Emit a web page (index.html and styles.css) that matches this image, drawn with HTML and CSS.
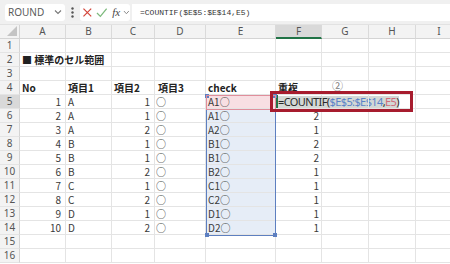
FILE: index.html
```html
<!DOCTYPE html>
<html>
<head>
    <title>COUNTIF</title>
    <link rel="stylesheet" href="styles.css">
</head>
<body>
<div class="formula-bar">
    <div class="namebox">
        <span>ROUND</span>
        <svg width="8" height="6" viewBox="0 0 8 6"><polyline points="1,1.5 4,4.5 7,1.5" fill="none" stroke="#777" stroke-width="1.1"/></svg>
    </div>
    <div class="grip">
        <svg width="3" height="11" viewBox="0 0 3 11"><circle cx="1.5" cy="1.5" r="1.2" fill="#555"/><circle cx="1.5" cy="5.5" r="1.2" fill="#555"/><circle cx="1.5" cy="9.5" r="1.2" fill="#555"/></svg>
    </div>
    <div class="fxbox">
        <svg width="11" height="11" viewBox="0 0 11 11"><path d="M1.5 1.5 L9.5 9.5 M9.5 1.5 L1.5 9.5" stroke="#d4453a" stroke-width="1.3" fill="none"/></svg>
        <svg width="12" height="11" viewBox="0 0 12 11"><polyline points="1,6 4.5,9.5 11,1.5" fill="none" stroke="#7dba7d" stroke-width="1.3"/></svg>
        <i class="fx">fx</i>
        <svg width="7" height="5" viewBox="0 0 7 5"><polyline points="1,1 3.5,3.8 6,1" fill="none" stroke="#888" stroke-width="1"/></svg>
    </div>
    <div class="formula">=COUNTIF($E$5:$E$14,E5)</div>
</div>

<div class="sheet">
    <!-- column headers -->
    <div class="corner"><svg width="10" height="10" viewBox="0 0 10 10"><polygon points="10,0 10,10 0,10" fill="#c4c4c4"/></svg></div>
    <div class="colhead">A</div><div class="colhead">B</div><div class="colhead">C</div><div class="colhead">D</div>
    <div class="colhead">E</div><div class="colhead sel">F</div><div class="colhead">G</div><div class="colhead">H</div><div class="colhead">I</div>

    <div class="rowhead">1</div><div></div><div></div><div></div><div></div><div></div><div></div><div></div><div></div><div></div>
    <div class="rowhead">2</div><div class="bold">■ 標準のセル範囲</div><div></div><div></div><div></div><div></div><div></div><div></div><div></div><div></div>
    <div class="rowhead">3</div><div></div><div></div><div></div><div></div><div></div><div></div><div></div><div></div><div></div>
    <div class="rowhead">4</div><div class="bold">No</div><div class="bold hd">項目1</div><div class="bold hd hd2">項目2</div><div class="bold hd hd3">項目3</div><div class="bold">check</div><div class="bold">重複</div><div class="circled">②</div><div></div><div></div>

    <div class="rowhead sel">5</div><div class="num">1</div><div class="txt">A</div><div class="num c">1</div><div class="mark">○</div><div class="ref red">A1○</div>
    <div class="editing"><span class="f-text">=COUNTIF(<span class="f-blue">$E$5:$E$14</span>,<span class="f-red">E5</span>)</span></div><div></div><div></div><div></div>
    <div class="rowhead">6</div><div class="num">2</div><div class="txt">A</div><div class="num c">1</div><div class="mark">○</div><div class="ref">A1○</div><div class="num f">2</div><div></div><div></div><div></div>
    <div class="rowhead">7</div><div class="num">3</div><div class="txt">A</div><div class="num c">2</div><div class="mark">○</div><div class="ref">A2○</div><div class="num f">1</div><div></div><div></div><div></div>
    <div class="rowhead">8</div><div class="num">4</div><div class="txt">B</div><div class="num c">1</div><div class="mark">○</div><div class="ref">B1○</div><div class="num f">2</div><div></div><div></div><div></div>
    <div class="rowhead">9</div><div class="num">5</div><div class="txt">B</div><div class="num c">1</div><div class="mark">○</div><div class="ref">B1○</div><div class="num f">2</div><div></div><div></div><div></div>
    <div class="rowhead">10</div><div class="num">6</div><div class="txt">B</div><div class="num c">2</div><div class="mark">○</div><div class="ref">B2○</div><div class="num f">1</div><div></div><div></div><div></div>
    <div class="rowhead">11</div><div class="num">7</div><div class="txt">C</div><div class="num c">1</div><div class="mark">○</div><div class="ref">C1○</div><div class="num f">1</div><div></div><div></div><div></div>
    <div class="rowhead">12</div><div class="num">8</div><div class="txt">C</div><div class="num c">2</div><div class="mark">○</div><div class="ref">C2○</div><div class="num f">1</div><div></div><div></div><div></div>
    <div class="rowhead">13</div><div class="num">9</div><div class="txt">D</div><div class="num c">1</div><div class="mark">○</div><div class="ref">D1○</div><div class="num f">1</div><div></div><div></div><div></div>
    <div class="rowhead">14</div><div class="num">10</div><div class="txt">D</div><div class="num c">2</div><div class="mark">○</div><div class="ref">D2○</div><div class="num f">1</div><div></div><div></div><div></div>
    <div class="rowhead">15</div><div></div><div></div><div></div><div></div><div></div><div></div><div></div><div></div><div></div>
    <div class="rowhead">16</div><div></div><div></div><div></div><div></div><div></div><div></div><div></div><div></div><div></div>

    <!-- overlays: referenced ranges and the annotation box -->
    <div class="range-blue"><i class="handle tl"></i><i class="handle tr"></i><i class="handle bl"></i><i class="handle br"></i></div>
    <div class="range-red"></div>
    <div class="callout"></div>
</div>
</body>
</html>
```

FILE: styles.css
```css
* {
    box-sizing: border-box;
}

body {
    margin: 0;
    width: 450px;
    height: 264px;
    overflow: hidden;
    background: #fff;
    color: #3a3a3a;
    font-family: "Noto Sans CJK JP", "Noto Sans", sans-serif;
    font-size: 10px;
}

/* Formula bar */
.formula-bar {
    display: flex;
    align-items: center;
    height: 25px;
    padding-left: 5px;
    background: #f0f0f0;
    border-bottom: 1px solid #e2e2e2;
}

.namebox {
    display: flex;
    align-items: center;
    justify-content: space-between;
    width: 60px;
    height: 17px;
    padding: 0 3px;
    background: #fff;
    border-radius: 3px;
    color: #5a5a5a;
    font-family: "Noto Sans", sans-serif;
    font-size: 10px;
}

.grip {
    display: flex;
    justify-content: center;
    width: 15px;
}

.fxbox {
    display: flex;
    align-items: center;
    gap: 3px;
    width: 50px;
    height: 17px;
    padding-left: 2px;
    background: #fff;
    border-radius: 3px;
}

.fx {
    font-family: "Liberation Serif", serif;
    font-size: 11px;
    color: #444;
    margin-left: 2px;
}

.formula {
    flex: 1;
    height: 17px;
    margin-left: 2px;
    padding-left: 8px;
    background: #fff;
    line-height: 17px;
    color: #333;
    font-family: "Liberation Mono", monospace;
    font-size: 8px;
}

/* Grid */
.sheet {
    position: relative;
    display: grid;
    grid-template-columns: 20px 46px 46px 43px 51px 70px 46px 47px 47px 47px;
    grid-auto-rows: 14px;
}

.sheet > div {
    border-right: 1px solid #e4e4e4;
    border-bottom: 1px solid #e4e4e4;
    line-height: 13px;
    white-space: nowrap;
    padding: 0 2px;
}

.sheet > .corner {
    display: flex;
    align-items: flex-end;
    justify-content: flex-end;
    padding: 0 2px 2px 0;
    background: #f3f3f3;
    border-right-color: #d4d4d4;
    border-bottom-color: #d4d4d4;
}

.sheet > .colhead {
    background: #f3f3f3;
    border-right-color: #dadada;
    border-bottom-color: #d4d4d4;
    text-align: center;
    color: #555;
    font-family: "Noto Sans", sans-serif;
}

.sheet > .rowhead {
    background: #f3f3f3;
    border-right-color: #d4d4d4;
    text-align: center;
    color: #555;
    font-family: "Noto Sans", sans-serif;
}

.sheet > .sel {
    background: #d9d9d9;
}

.sheet > .colhead.sel {
    border-bottom: 2px solid #217346;
}

.bold {
    font-weight: bold;
    color: #222;
}

.sheet > .hd {
    text-align: right;
    padding-right: 20px;
}

.sheet > .hd2 {
    padding-right: 18px;
}

.sheet > .hd3 {
    padding-right: 21px;
}

.sheet > .num {
    text-align: right;
    padding-right: 4px;
}

.sheet > .f {
    padding-right: 2px;
}

.sheet > .mark {
    padding-left: 1px;
}

.sheet > .ref {
    background: #e6edf7;
    padding-left: 2px;
}

.sheet > .ref.red {
    background: #f8dfe3;
}

.sheet > .circled {
    padding-left: 10px;
    color: #777;
    font-size: 11px;
    line-height: 8px;
}

/* cell in edit mode: active border drawn under the text */
.sheet > .editing {
    padding-left: 2px;
    line-height: 14px;
    box-shadow: inset 2px -2px 0 0 #217346;
}

.f-text {
    display: inline-block;
    background: #d3d8d6;
    color: #2a2a2a;
    font-family: "Noto Sans", sans-serif;
    font-size: 11px;
    line-height: 12px;
    letter-spacing: -0.6px;
}

.f-blue {
    color: #5a82c8;
}

.f-red {
    color: #d06a7a;
}

/* overlays */
.sheet > .range-blue {
    position: absolute;
    left: 206px;
    top: 70px;
    width: 70px;
    height: 141px;
    padding: 0;
    border: 1px solid #5d7fc0;
}

.handle {
    position: absolute;
    width: 4px;
    height: 4px;
    background: #5d7fc0;
}

.tl { left: -2px; top: -2px; }
.tr { right: -2px; top: -2px; }
.bl { left: -2px; bottom: -2px; }
.br { right: -2px; bottom: -2px; }

.sheet > .range-red {
    position: absolute;
    left: 206px;
    top: 70px;
    width: 70px;
    height: 15px;
    padding: 0;
    border: 1px solid #e08e9b;
}

.sheet > .callout {
    position: absolute;
    left: 270px;
    top: 66px;
    width: 143px;
    height: 21px;
    padding: 0;
    border: 3px solid #a71c2e;
}
```
